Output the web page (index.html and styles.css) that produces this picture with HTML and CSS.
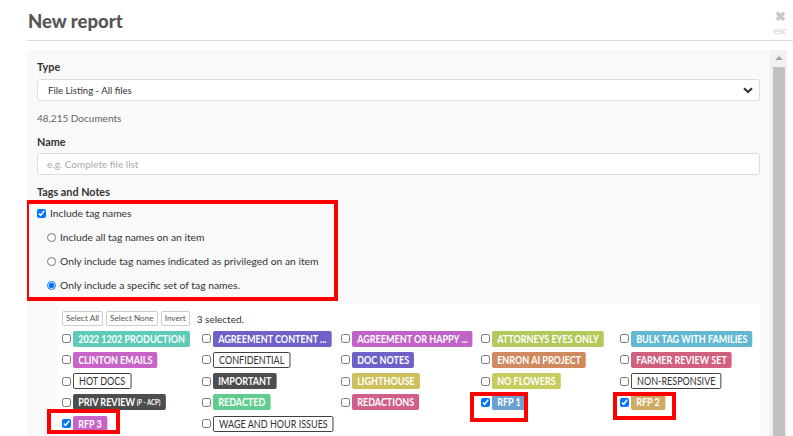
FILE: index.html
```html
<!DOCTYPE html>
<html>
<head>
<meta charset="utf-8">
<link rel="stylesheet" href="styles.css">
</head>
<body>
<div class="modal">
  <header class="head">
    <h1 class="title">New report</h1>
    <div class="close"><span class="close-x">&#10006;</span><span class="close-esc">esc</span></div>
  </header>
  <div class="body">
    <div class="content">
      <label class="field-label">Type</label>
      <div class="select">
        <span>File Listing - All files</span>
        <svg class="chev" width="10" height="7" viewBox="0 0 10 7"><path d="M1 1.2 L5 5 L9 1.2" fill="none" stroke="#333" stroke-width="2.2"/></svg>
      </div>
      <div class="count">48,215 Documents</div>
      <label class="field-label">Name</label>
      <div class="input"><span class="placeholder">e.g. Complete file list</span></div>
      <label class="field-label tags-label">Tags and Notes</label>
      <div class="group">
        <label class="check-row"><input type="checkbox" checked class="cb"> Include tag names</label>
        <div class="radios">
          <label class="radio-row"><input type="radio" name="r" class="rb"> Include all tag names on an item</label>
          <label class="radio-row"><input type="radio" name="r" class="rb"> Only include tag names indicated as privileged on an item</label>
          <label class="radio-row"><input type="radio" name="r" class="rb" checked> Only include a specific set of tag names.</label>
        </div>
      </div>
      <div class="tagbox">
        <div class="toolbar">
          <button class="btn">Select All</button>
          <button class="btn">Select None</button>
          <button class="btn">Invert</button>
          <span class="selected">3 selected.</span>
        </div>
        <div class="grid">
          <div class="cell"><input type="checkbox" class="cb"><span class="tag t-teal">2022 1202 PRODUCTION</span></div>
          <div class="cell"><input type="checkbox" class="cb"><span class="tag t-indigo">AGREEMENT CONTENT ...</span></div>
          <div class="cell"><input type="checkbox" class="cb"><span class="tag t-orchid">AGREEMENT OR HAPPY ...</span></div>
          <div class="cell"><input type="checkbox" class="cb"><span class="tag t-olive">ATTORNEYS EYES ONLY</span></div>
          <div class="cell"><input type="checkbox" class="cb"><span class="tag t-sky">BULK TAG WITH FAMILIES</span></div>

          <div class="cell"><input type="checkbox" class="cb"><span class="tag t-magenta">CLINTON EMAILS</span></div>
          <div class="cell"><input type="checkbox" class="cb"><span class="tag t-outline">CONFIDENTIAL</span></div>
          <div class="cell"><input type="checkbox" class="cb"><span class="tag t-indigo">DOC NOTES</span></div>
          <div class="cell"><input type="checkbox" class="cb"><span class="tag t-copper">ENRON AI PROJECT</span></div>
          <div class="cell"><input type="checkbox" class="cb"><span class="tag t-rose">FARMER REVIEW SET</span></div>

          <div class="cell"><input type="checkbox" class="cb"><span class="tag t-outline">HOT DOCS</span></div>
          <div class="cell"><input type="checkbox" class="cb"><span class="tag t-dark">IMPORTANT</span></div>
          <div class="cell"><input type="checkbox" class="cb"><span class="tag t-mustard">LIGHTHOUSE</span></div>
          <div class="cell"><input type="checkbox" class="cb"><span class="tag t-lime">NO FLOWERS</span></div>
          <div class="cell"><input type="checkbox" class="cb"><span class="tag t-outline">NON-RESPONSIVE</span></div>

          <div class="cell"><input type="checkbox" class="cb"><span class="tag t-dark">PRIV REVIEW <small class="priv">(P - ACP)</small></span></div>
          <div class="cell"><input type="checkbox" class="cb"><span class="tag t-green">REDACTED</span></div>
          <div class="cell"><input type="checkbox" class="cb"><span class="tag t-pink">REDACTIONS</span></div>
          <div class="cell marked mark-rfp1"><input type="checkbox" class="cb" checked><span class="tag t-blue">RFP 1</span></div>
          <div class="cell marked mark-rfp2"><input type="checkbox" class="cb" checked><span class="tag t-tan">RFP 2</span></div>

          <div class="cell marked mark-rfp3"><input type="checkbox" class="cb" checked><span class="tag t-magenta">RFP 3</span></div>
          <div class="cell"><input type="checkbox" class="cb"><span class="tag t-outline">WAGE AND HOUR ISSUES</span></div>
        </div>
      </div>
    </div>
    <div class="scrollbar">
      <div class="sb-arrow"></div>
      <div class="sb-thumb"></div>
    </div>
  </div>
</div>
</body>
</html>
```

FILE: styles.css
```css
*, *::before, *::after { box-sizing: border-box; }
html, body { margin: 0; padding: 0; background: #fff; overflow: hidden; }
body {
  font-family: Lato, "Open Sans", Arial, sans-serif;
  color: #333;
  width: 793px;
  height: 436px;
}
.modal { padding-left: 27px; height: 436px; overflow: hidden; }
.head {
  display: flex;
  justify-content: space-between;
  align-items: flex-start;
  height: 41px;
  border-bottom: 1px solid #ddd;
}
.title {
  margin: 9px 0 0 1px;
  font-size: 18.5px;
  font-weight: 900;
  color: #555;
  line-height: 24px;
}
.close {
  display: flex;
  flex-direction: column;
  align-items: center;
  width: 20px;
  margin: 10px 3px 0 0;
  color: #c8c8c8;
}
.close-x { font-size: 13px; line-height: 13px; font-weight: 700; height: 13px; }
.close-esc { font-size: 9.5px; line-height: 9px; margin-top: 3px; color: #d0d0d0; }

.body {
  display: flex;
  margin-top: 9px;
  height: 386px;
  width: 760px;
}
.content {
  flex: 1;
  background: #f9f9f9;
  padding: 9px 10px 0 10px;
  overflow: hidden;
}
.field-label {
  display: block;
  font-size: 10.8px;
  font-weight: 700;
  line-height: 16px;
  color: #333;
}
.select, .input {
  margin-top: 4px;
  height: 22px;
  background: #fff;
  border: 1px solid #ddd;
  border-radius: 3px;
  display: flex;
  align-items: center;
  justify-content: space-between;
  padding: 0 6px 0 10px;
  font-size: 9.6px;
  color: #333;
}
.chev { display: block; }
.count {
  margin-top: 9px;
  font-size: 10px;
  line-height: 16px;
  color: #666;
  margin-bottom: 8px;
}
.input { margin-top: 3px; padding-left: 9px; }
.placeholder { color: #aaa; font-size: 10px; }
.tags-label { margin-top: 9px; }

.group {
  width: 313px;
  height: 101px;
  margin-left: -12px;
  border: 4px solid #f00;
  padding-left: 8px;
  font-size: 10.3px;
  color: #333;
}
.check-row {
  display: flex;
  align-items: center;
  height: 18px;
}
.cb {
  width: 9px;
  height: 9px;
  margin: 0 4px 0 0;
  flex: none;
}
.radios { padding-top: 3px; padding-left: 10px; }
.radio-row {
  display: flex;
  align-items: center;
  height: 24px;
  white-space: nowrap;
}
.rb {
  width: 9px;
  height: 9px;
  margin: 0 4px 0 0;
}

.tagbox {
  margin-top: 2px;
  margin-left: 20px;
  background: #fff;
  padding: 8px 0 20px 5px;
}
.toolbar {
  display: flex;
  align-items: center;
  height: 15px;
}
.btn {
  font-family: inherit;
  height: 15px;
  padding: 0 3px;
  margin: 0 3px 0 0;
  font-size: 8.2px;
  color: #555;
  background: #fff;
  border: 1px solid #ccc;
  border-radius: 2px;
  line-height: 13px;
}
.selected { margin-left: 4px; font-size: 10px; color: #333; }
.grid {
  margin-top: 2px;
  display: grid;
  grid-template-columns: repeat(5, 139.5px);
  grid-auto-rows: 21.25px;
}
.cell {
  display: flex;
  align-items: center;
  position: relative;
}
.cell .cb { margin-right: 2px; }
.tag {
  display: inline-flex;
  align-items: center;
  height: 16px;
  padding: 0 6px;
  border-radius: 2px;
  font-size: 10.5px;
  font-weight: 700;
  color: #fff;
  white-space: nowrap;
  transform: scaleX(0.86);
  transform-origin: left center;
}
.priv { font-size: 7px; margin-left: 2px; font-weight: 700; }
.t-teal { background: #5ecbb8; }
.t-indigo { background: #6e62c8; }
.t-orchid { background: #c062c8; }
.t-olive { background: #b2c95c; }
.t-sky { background: #62b8d0; }
.t-magenta { background: #c864c8; }
.t-copper { background: #d08a5e; }
.t-rose { background: #d0607e; }
.t-dark { background: #4d4d4d; }
.t-mustard { background: #cdbf5c; }
.t-lime { background: #c7cc5e; }
.t-green { background: #62cc8e; }
.t-pink { background: #d0608a; }
.t-blue { background: #6ca0d0; }
.t-tan { background: #d0aa62; }
.t-outline {
  background: #fff;
  color: #333;
  font-weight: 400;
  border: 1px solid #333;
}

.marked::after {
  content: "";
  position: absolute;
  border: 4px solid #f00;
}
.mark-rfp1::after { left: -11px; top: 0; width: 58px; height: 30px; }
.mark-rfp2::after { left: -7px; top: 0; width: 63px; height: 28px; }
.mark-rfp3::after { left: -15px; top: -4px; width: 73px; height: 25px; }

.scrollbar {
  width: 17px;
  background: #f1f1f1;
  display: flex;
  flex-direction: column;
  align-items: center;
}
.sb-arrow {
  margin-top: 6px;
  width: 0; height: 0;
  border-left: 4px solid transparent;
  border-right: 4px solid transparent;
  border-bottom: 4px solid #a3a3a3;
}
.sb-thumb {
  margin-top: 7px;
  width: 12px;
  flex: 1;
  background: #c1c1c1;
}
```
